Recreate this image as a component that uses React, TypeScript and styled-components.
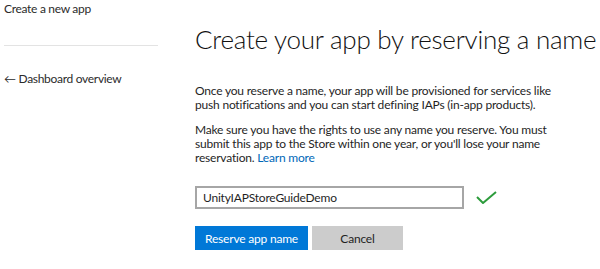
import styled, { createGlobalStyle } from "styled-components";

const Global = createGlobalStyle`
  html, body {
    margin: 0;
    padding: 0;
    background: #ffffff;
  }
  body {
    font-family: Lato, "Liberation Sans", sans-serif;
    color: #1f1f1f;
  }
`;

const Page = styled.div`
  display: flex;
  width: 600px;
  height: 269px;
  overflow: hidden;
`;

const Sidebar = styled.div`
  width: 154px;
  margin-left: 4px;
  flex-shrink: 0;
`;

const NavTitle = styled.div`
  font-size: 12px;
  line-height: 16px;
  letter-spacing: -0.3px;
  margin-top: 1px;
  color: #2b2b2b;
`;

const Divider = styled.div`
  height: 1px;
  background: #e3e3e3;
  margin-top: 28px;
`;

const BackLink = styled.a`
  display: block;
  margin-top: 25px;
  font-size: 12px;
  line-height: 16px;
  letter-spacing: -0.3px;
  color: #2b2b2b;
  text-decoration: none;
`;

const Main = styled.div`
  margin-left: 37px;
  width: 400px;
`;

const Title = styled.h1`
  margin: 22px 0 0 0;
  font-size: 26px;
  line-height: 34px;
  font-weight: 300;
  letter-spacing: -0.25px;
  color: #111;
  white-space: nowrap;
`;

const Para = styled.p<{ $top: number }>`
  margin: ${(p) => p.$top}px 0 0 0;
  font-size: 12px;
  line-height: 14px;
  letter-spacing: -0.2px;
  white-space: nowrap;
  color: #1f1f1f;
`;

const Link = styled.a`
  color: #0067b8;
  text-decoration: none;
`;

const NameRow = styled.div`
  display: flex;
  align-items: center;
  margin-top: 21px;
  gap: 12px;
`;

const NameInput = styled.input`
  box-sizing: border-box;
  width: 269px;
  height: 23px;
  border: 2px solid #a6a6a6;
  padding: 0 6px;
  font-family: Lato, "Liberation Sans", sans-serif;
  font-size: 12px;
  letter-spacing: -0.2px;
  color: #1f1f1f;
  outline: none;
`;

const Actions = styled.div`
  display: flex;
  gap: 4px;
  margin-top: 17px;
`;

const Button = styled.button<{ $primary?: boolean }>`
  box-sizing: border-box;
  height: 24px;
  width: ${(p) => (p.$primary ? 113 : 91)}px;
  border: none;
  padding: 0;
  font-family: Lato, "Liberation Sans", sans-serif;
  font-size: 12px;
  letter-spacing: -0.2px;
  background: ${(p) => (p.$primary ? "#0078d7" : "#cccccc")};
  color: ${(p) => (p.$primary ? "#ffffff" : "#1f1f1f")};
`;

const Check = () => (
  <svg width="21" height="13" viewBox="0 0 21 13">
    <path d="M1 6 L7 12 L20 1" fill="none" stroke="#2d9c3c" strokeWidth="2" />
  </svg>
);

export default function App() {
  return (
    <>
      <Global />
      <Page>
        <Sidebar>
          <NavTitle>Create a new app</NavTitle>
          <Divider />
          <BackLink href="#">← Dashboard overview</BackLink>
        </Sidebar>
        <Main>
          <Title>Create your app by reserving a name</Title>
          <Para $top={28}>
            Once you reserve a name, your app will be provisioned for services like
            <br />
            push notifications and you can start defining IAPs (in-app products).
          </Para>
          <Para $top={11}>
            Make sure you have the rights to use any name you reserve. You must
            <br />
            submit this app to the Store within one year, or you'll lose your name
            <br />
            reservation. <Link href="#">Learn more</Link>
          </Para>
          <NameRow>
            <NameInput defaultValue="UnityIAPStoreGuideDemo" />
            <Check />
          </NameRow>
          <Actions>
            <Button $primary>Reserve app name</Button>
            <Button>Cancel</Button>
          </Actions>
        </Main>
      </Page>
    </>
  );
}
